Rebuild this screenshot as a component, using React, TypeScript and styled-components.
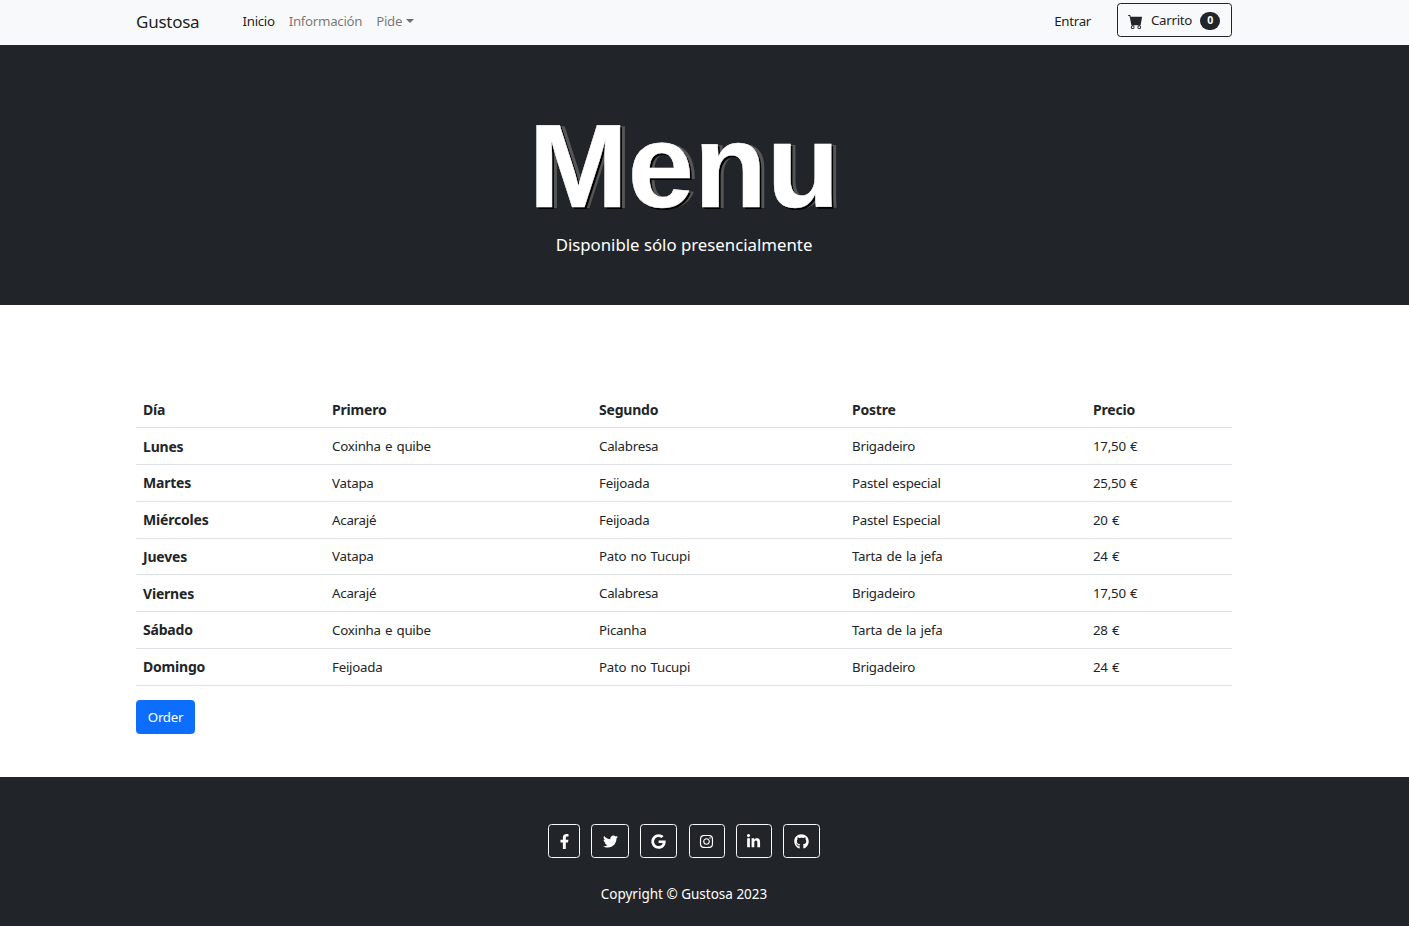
import styled, { createGlobalStyle } from "styled-components"
import { BsCartFill } from "react-icons/bs"
import { FaFacebookF, FaTwitter, FaGoogle, FaInstagram, FaLinkedinIn, FaGithub } from "react-icons/fa"

const GlobalStyle = createGlobalStyle`
  html { font-size: 14px; }
  body {
    margin: 0;
    font-family: "Noto Sans", "Open Sans", sans-serif;
    font-size: 13.3px;
    letter-spacing: -0.3px;
    line-height: 1.5;
    color: #212529;
    background: #fff;
  }
`

const rows = [
  ["Lunes", "Coxinha e quibe", "Calabresa", "Brigadeiro", "17,50 €"],
  ["Martes", "Vatapa", "Feijoada", "Pastel especial", "25,50 €"],
  ["Miércoles", "Acarajé", "Feijoada", "Pastel Especial", "20 €"],
  ["Jueves", "Vatapa", "Pato no Tucupi", "Tarta de la jefa", "24 €"],
  ["Viernes", "Acarajé", "Calabresa", "Brigadeiro", "17,50 €"],
  ["Sábado", "Coxinha e quibe", "Picanha", "Tarta de la jefa", "28 €"],
  ["Domingo", "Feijoada", "Pato no Tucupi", "Brigadeiro", "24 €"],
]

const socials = [
  { Icon: FaFacebookF, w: 32 },
  { Icon: FaTwitter, w: 38 },
  { Icon: FaGoogle, w: 37 },
  { Icon: FaInstagram, w: 36 },
  { Icon: FaLinkedinIn, w: 36 },
  { Icon: FaGithub, w: 37 },
]

const App = () => {
  return (
    <div>
      <GlobalStyle />
      <Navbar>
        <NavWrap>
          <Brand>Gustosa</Brand>
          <NavLinks>
            <NavLink $active>Inicio</NavLink>
            <NavLink>Información</NavLink>
            <NavLink>Pide<Caret /></NavLink>
          </NavLinks>
          <NavRight>
            <Login>Entrar</Login>
            <CartButton>
              <BsCartFill />
              <CartLabel>Carrito</CartLabel>
              <Badge>0</Badge>
            </CartButton>
          </NavRight>
        </NavWrap>
      </Navbar>
      <Hero>
        <HeroText>
          <Title>Menu</Title>
          <Lead>Disponible sólo presencialmente</Lead>
        </HeroText>
      </Hero>
      <Main>
        <Table>
          <colgroup>
            <col width="189" />
            <col width="267" />
            <col width="253" />
            <col width="241" />
            <col width="146" />
          </colgroup>
          <thead>
            <tr>
              <Th>Día</Th>
              <Th>Primero</Th>
              <Th>Segundo</Th>
              <Th>Postre</Th>
              <Th>Precio</Th>
            </tr>
          </thead>
          <tbody>
            {rows.map((row) => (
              <tr key={row[0]}>
                <Th>{row[0]}</Th>
                {row.slice(1).map((cell, i) => (
                  <Td key={i}>{cell}</Td>
                ))}
              </tr>
            ))}
          </tbody>
        </Table>
        <OrderButton>Order</OrderButton>
      </Main>
      <Footer>
        <FooterWrap>
          <Socials>
            {socials.map(({ Icon, w }, i) => (
              <SocialButton key={i} $w={w}>
                <Icon />
              </SocialButton>
            ))}
          </Socials>
          <Copyright>Copyright © Gustosa 2023</Copyright>
        </FooterWrap>
      </Footer>
    </div>
  )
}

export default App

const Navbar = styled.nav`
  height: 45px;
  background-color: #f8f9fa;
`
const NavWrap = styled.div`
  width: 1096px;
  height: 100%;
  margin-left: 136px;
  display: flex;
  align-items: center;
`
const Brand = styled.a`
  font-size: 17px;
  letter-spacing: -0.25px;
  width: 92px;
  margin-top: -1px;
  color: rgba(0, 0, 0, 0.9);
`
const NavLinks = styled.div`
  display: flex;
  margin-left: 7.5px;
  margin-top: -2px;
`
const NavLink = styled.a<{ $active?: boolean }>`
  padding: 0 7px;
  color: ${({ $active }) => ($active ? "rgba(0, 0, 0, 0.9)" : "rgba(0, 0, 0, 0.55)")};
  display: flex;
  align-items: center;
`
const Caret = styled.i`
  display: inline-block;
  margin-left: 4px;
  margin-bottom: 2px;
  border-top: 4px solid;
  border-right: 4px solid transparent;
  border-left: 4px solid transparent;
`
const NavRight = styled.div`
  margin-left: auto;
  display: flex;
  align-items: center;
`
const Login = styled.a`
  margin-right: 26px;
  margin-top: -2px;
  color: rgba(0, 0, 0, 0.9);
`
const CartButton = styled.button`
  width: 115px;
  height: 34px;
  margin-top: -5px;
  padding: 0 10px;
  display: flex;
  align-items: center;
  font: inherit;
  letter-spacing: inherit;
  color: #212529;
  background: transparent;
  border: 1px solid #212529;
  border-radius: 3.5px;
  svg {
    font-size: 15px;
    margin-top: 3px;
    margin-right: 8px;
  }
`
const CartLabel = styled.span`
  margin-top: 2px;
`
const Badge = styled.span`
  width: 20px;
  height: 18px;
  margin-left: 8px;
  margin-top: 1px;
  display: flex;
  align-items: center;
  justify-content: center;
  font-size: 10.5px;
  font-weight: 700;
  color: #fff;
  background-color: #212529;
  border-radius: 10px;
`
const Hero = styled.header`
  height: 260px;
  background-color: #212529;
`
const HeroText = styled.div`
  width: 1120px;
  margin-left: 124px;
  padding-top: 52px;
  text-align: center;
  color: #fff;
`
const Title = styled.h1`
  margin: 0;
  font-family: "Liberation Sans", Arial, sans-serif;
  font-size: 119px;
  font-weight: 700;
  letter-spacing: 0;
  line-height: 138px;
  -webkit-text-stroke: 0.5px #fff;
  text-shadow: 2px 2px 0 #000, 5px 1px 0 #555;
`
const Lead = styled.p`
  margin: -3px 0 0;
  font-size: 16.8px;
  letter-spacing: 0;
  line-height: 26px;
`
const Main = styled.main`
  width: 1096px;
  height: 472px;
  margin-left: 136px;
  padding-top: 86px;
  box-sizing: border-box;
`
const Table = styled.table`
  width: 100%;
  table-layout: fixed;
  border-collapse: collapse;
  margin-bottom: 14px;
  tr {
    height: 36.75px;
    border-bottom: 1px solid #dee2e6;
  }
`
const Th = styled.th`
  padding: 7px;
  text-align: left;
  font-size: 14px;
  letter-spacing: -0.2px;
  font-weight: 700;
`
const Td = styled.td`
  padding: 8px 7px 6px;
  font-size: 13.3px;
  letter-spacing: -0.25px;
  word-spacing: 1px;
`
const OrderButton = styled.button`
  height: 34px;
  width: 59px;
  padding: 3px 0 0;
  font: inherit;
  letter-spacing: inherit;
  color: #fff;
  background-color: #0d6efd;
  border: 1px solid #0d6efd;
  border-radius: 3.5px;
`
const Footer = styled.footer`
  height: 149px;
  background-color: #212529;
`
const FooterWrap = styled.div`
  width: 1120px;
  margin-left: 124px;
  padding-top: 47px;
  display: flex;
  flex-direction: column;
  align-items: center;
`
const Socials = styled.div`
  display: flex;
  gap: 11.2px;
`
const SocialButton = styled.a<{ $w: number }>`
  width: ${({ $w }) => $w}px;
  height: 34px;
  box-sizing: border-box;
  display: flex;
  align-items: center;
  justify-content: center;
  font-size: 15px;
  color: #fff;
  border: 1px solid #f8f9fa;
  border-radius: 3.5px;
`
const Copyright = styled.p`
  margin: 26px 0 0;
  font-size: 13.5px;
  letter-spacing: 0;
  color: #fff;
`
